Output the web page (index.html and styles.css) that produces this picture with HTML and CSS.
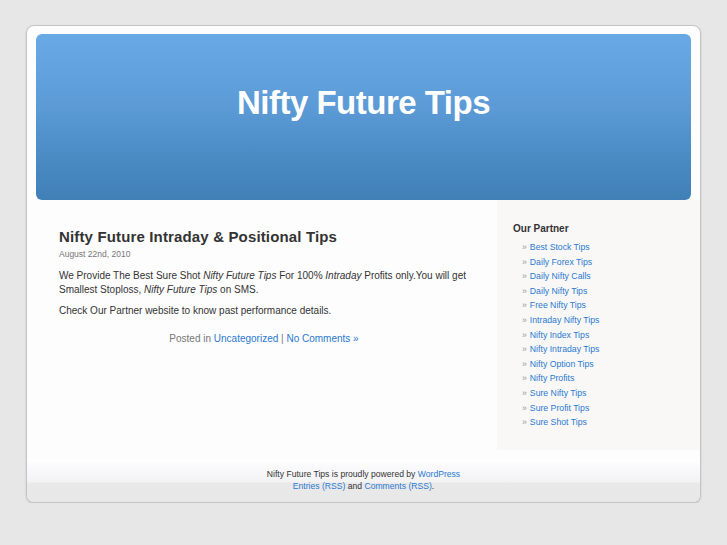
FILE: index.html
```html
<!DOCTYPE html>
<html lang="en">
<head>
    <meta charset="UTF-8">
    <title>Nifty Future Tips</title>
    <link rel="stylesheet" href="styles.css">
</head>
<body>

    <div class="page">

        <!-- Header -->
        <div class="header-wrap">
            <div class="header">
                <h1><a href="#">Nifty Future Tips</a></h1>
            </div>
        </div>

        <div class="main">

            <!-- Posts -->
            <div class="content">
                <div class="post">
                    <h2><a href="#">Nifty Future Intraday &amp; Positional Tips</a></h2>
                    <small>August 22nd, 2010</small>

                    <div class="entry">
                        <p>We Provide The Best Sure Shot <em>Nifty Future Tips</em> For 100% <em>Intraday</em> Profits only.You will get Smallest Stoploss, <em>Nifty Future Tips</em> on SMS.</p>
                        <p>Check Our Partner website to know past performance details.</p>
                    </div>

                    <p class="postmetadata">Posted in <a href="#">Uncategorized</a> | <a href="#">No Comments &raquo;</a></p>
                </div>
            </div>

            <!-- Sidebar -->
            <div class="sidebar">
                <h2>Our Partner</h2>
                <ul>
                    <li><a href="#">Best Stock Tips</a></li>
                    <li><a href="#">Daily Forex Tips</a></li>
                    <li><a href="#">Daily Nifty Calls</a></li>
                    <li><a href="#">Daily Nifty Tips</a></li>
                    <li><a href="#">Free Nifty Tips</a></li>
                    <li><a href="#">Intraday Nifty Tips</a></li>
                    <li><a href="#">Nifty Index Tips</a></li>
                    <li><a href="#">Nifty Intraday Tips</a></li>
                    <li><a href="#">Nifty Option Tips</a></li>
                    <li><a href="#">Nifty Profits</a></li>
                    <li><a href="#">Sure Nifty Tips</a></li>
                    <li><a href="#">Sure Profit Tips</a></li>
                    <li><a href="#">Sure Shot Tips</a></li>
                </ul>
            </div>

        </div>

        <!-- Footer -->
        <div class="footer">
            <p>Nifty Future Tips is proudly powered by <a href="#">WordPress</a><br>
            <a href="#">Entries (RSS)</a> and <a href="#">Comments (RSS)</a>.</p>
        </div>

    </div>

</body>
</html>
```

FILE: styles.css
```css
* {
    margin: 0;
    padding: 0;
    box-sizing: border-box;
}

body {
    background: #e7e7e7;
    color: #333;
    font-family: "Liberation Sans", Arial, sans-serif;
}

a {
    color: #2a79d0;
    text-decoration: none;
}

.page {
    width: 675px;
    margin: 25px auto 0;
    background: #fdfdfd;
    border: 1px solid #c4c4c4;
    border-radius: 8px;
    box-shadow: 0 1px 2px rgba(0, 0, 0, 0.15);
    overflow: hidden;
}

/* Header */
.header-wrap {
    padding: 8px 9px 0;
}

.header {
    height: 166px;
    border-radius: 6px;
    background: linear-gradient(#69aae6, #5b9ad5 45%, #4a8bc4 75%, #417fb7);
    text-align: center;
    padding-top: 49px;
}

.header h1 {
    font-size: 33px;
    letter-spacing: -0.5px;
    line-height: 40px;
}

.header h1 a {
    color: #fff;
}

/* Main area */
.main {
    display: flex;
    height: 260px;
}

.content {
    flex: 1;
    padding: 28px 28px 0 32px;
}

.post h2 {
    font-size: 15px;
    line-height: 18px;
    letter-spacing: 0.15px;
}

.post h2 a {
    color: #333;
}

.post small {
    display: block;
    font-size: 8.5px;
    color: #777;
    margin-top: 3px;
}

.entry {
    margin-top: 10px;
    font-size: 10px;
    line-height: 14px;
}

.entry p {
    margin-bottom: 7px;
}

.postmetadata {
    text-align: center;
    font-size: 10px;
    color: #777;
    margin-top: 15px;
}

/* Sidebar */
.sidebar {
    width: 203px;
    height: 250px;
    background: #f9f8f7;
    padding: 22px 16px 0;
}

.sidebar h2 {
    font-size: 10px;
    line-height: 14px;
    color: #333;
    margin-bottom: 4px;
}

.sidebar ul {
    list-style: none;
    padding-left: 9px;
}

.sidebar li {
    font-size: 8.7px;
    line-height: 14.6px;
}

.sidebar li::before {
    content: "\00BB";
    color: #999;
    margin-right: 3px;
}

/* Footer */
.footer {
    height: 42px;
    background: linear-gradient(#fff 0, #fafafc 6px, #f3f3f5 22px, #e9e9e9 23px, #e8e8e8);
    text-align: center;
    padding-top: 8px;
}

.footer p {
    font-size: 8.6px;
    line-height: 12px;
    color: #333;
}
```
